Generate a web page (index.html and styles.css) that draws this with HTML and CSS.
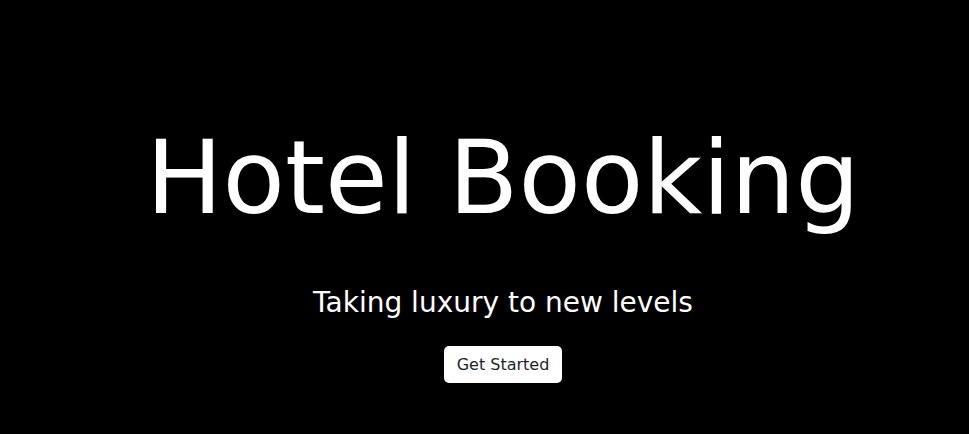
FILE: index.html
```html
<!DOCTYPE html>
<html>
<head>
<meta charset="utf-8">
<link rel="stylesheet" href="styles.css">
</head>
<body>
<main class="hero">
  <h1 class="hero-title">Hotel Booking</h1>
  <p class="hero-subtitle">Taking luxury to new levels</p>
  <a class="hero-button" href="#">Get Started</a>
</main>
</body>
</html>
```
FILE: styles.css
```css
html, body {
  margin: 0;
  padding: 0;
  background: #000;
  height: 100%;
}
.hero {
  display: flex;
  flex-direction: column;
  align-items: center;
  padding: 128px 0 0 37px;
  font-family: "DejaVu Sans", sans-serif;
  color: #fff;
}
.hero-title {
  margin: 0;
  font-size: 102px;
  line-height: 100px;
  font-weight: 400;
}
.hero-subtitle {
  margin: 58px 0 0;
  font-size: 28px;
  line-height: 34px;
}
.hero-button {
  margin-top: 26px;
  background: #fff;
  color: #212529;
  text-decoration: none;
  font-size: 16px;
  line-height: 21px;
  padding: 8px 13px;
  border-radius: 5px;
}
```
